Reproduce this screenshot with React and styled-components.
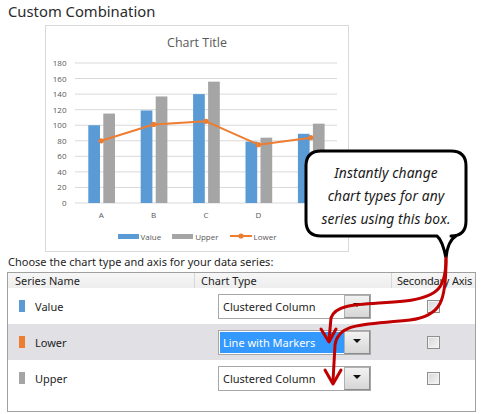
import React from "react";
import styled, { createGlobalStyle } from "styled-components";

const Global = createGlobalStyle`
  html, body { margin: 0; padding: 0; background: #fff; }
  body { font-family: "Noto Sans", "Open Sans", sans-serif; color: #1e1e1e; }
`;

const Page = styled.div`
  position: relative;
  width: 481px;
  height: 414px;
  overflow: hidden;
  background: #fff;
`;

const Heading = styled.div`
  padding-left: 8px;
  font-size: 14.8px;
  line-height: 22px;
  color: #2b2b2b;
`;

const ChartPanel = styled.div`
  box-sizing: border-box;
  margin: 3px 0 0 45px;
  width: 304px;
  height: 227px;
  border: 1px solid #d9d9d9;
  display: flex;
  flex-direction: column;
  font-family: "Open Sans", sans-serif;
`;

const ChartTitle = styled.div`
  height: 30px;
  padding-top: 4px;
  box-sizing: border-box;
  text-align: center;
  font-size: 12.5px;
  line-height: 26px;
  color: #595959;
`;

const Plot = styled.svg`
  display: block;
  width: 302px;
  height: 169px;
`;

const Legend = styled.div`
  height: 22px;
  display: flex;
  justify-content: center;
  align-items: center;
  gap: 11px;
  font-size: 8px;
  color: #595959;
`;

const LegendItem = styled.div`
  display: flex;
  align-items: center;
  gap: 2px;
`;

const LegendBar = styled.span`
  width: 21px;
  height: 5px;
  background: ${(p) => p.$color};
`;

const Instruction = styled.div`
  margin: 2px 0 0 8px;
  font-size: 11px;
  line-height: 16px;
  color: #1e1e1e;
`;

const Table = styled.div`
  box-sizing: border-box;
  margin: 2px 0 0 7px;
  width: 469px;
  height: 140px;
  border: 1px solid #a0a0a0;
`;

const Grid = styled.div`
  display: grid;
  grid-template-columns: 186px 197px 1fr;
`;

const HeaderRow = styled(Grid)`
  height: 15px;
  background: linear-gradient(#f6f6f6, #eeeeee);
  font-size: 11px;
  line-height: 15px;
  color: #1e1e1e;
`;

const HeaderCell = styled.div`
  padding-left: ${(p) => p.$pad}px;
  border-left: ${(p) => (p.$first ? "none" : "1px solid #d8d8d8")};
  white-space: nowrap;
  overflow: hidden;
  letter-spacing: ${(p) => (p.$tight ? "-0.2px" : "0")};
`;

const Row = styled(Grid)`
  height: 36px;
  align-items: center;
  background: ${(p) => (p.$selected ? "#e0e0e5" : "transparent")};
  font-size: 11px;
`;

const SeriesCell = styled.div`
  display: flex;
  align-items: center;
  gap: 10px;
  padding-left: 11px;
`;

const Swatch = styled.span`
  width: 6px;
  height: 12px;
  background: ${(p) => p.$color};
`;

const TypeCell = styled.div`
  padding-left: 24px;
`;

const Dropdown = styled.div`
  box-sizing: border-box;
  width: 153px;
  height: 25px;
  display: flex;
  border: 1px solid #a7a7a7;
  background: #fff;
`;

const DropText = styled.div`
  flex: 1;
  margin: 1px 0 1px 1px;
  padding-left: 3px;
  line-height: 21px;
  background: ${(p) => (p.$selected ? "#3399ff" : "#fff")};
  color: ${(p) => (p.$selected ? "#fff" : "#1e1e1e")};
  white-space: nowrap;
`;

const DropButton = styled.div`
  box-sizing: border-box;
  width: 26px;
  display: flex;
  align-items: center;
  justify-content: center;
  border: 1px solid #8c8c8c;
  border-top-color: #b0b0b0;
  border-left-color: #b0b0b0;
  background: linear-gradient(#f2f2f2, #d6d6d6);
`;

const Caret = styled.span`
  width: 0;
  height: 0;
  margin-top: -2px;
  border-left: 4px solid transparent;
  border-right: 4px solid transparent;
  border-top: 4px solid #111;
`;

const CheckCell = styled.div`
  display: flex;
  justify-content: center;
`;

const Check = styled.span`
  box-sizing: border-box;
  width: 13px;
  height: 13px;
  border: 1px solid #8e8e8e;
  background: linear-gradient(135deg, #d6d6d6, #f6f6f6);
  box-shadow: inset 0 0 0 1px #f2f2f2;
`;

const Callout = styled.div`
  position: absolute;
  left: 303px;
  top: 148px;
  width: 166px;
  height: 114px;
`;

const CalloutShape = styled.svg`
  position: absolute;
  left: 0;
  top: 0;
`;

const CalloutText = styled.div`
  position: absolute;
  left: 2px;
  top: 13px;
  width: 162px;
  text-align: center;
  font-family: "Noto Sans", sans-serif;
  font-style: italic;
  font-size: 13.8px;
  line-height: 23px;
  letter-spacing: 0.1px;
  color: #1a1a1a;
`;

const Arrows = styled.svg`
  position: absolute;
  left: 0;
  top: 0;
  pointer-events: none;
`;

const COLORS = { value: "#5b9bd5", upper: "#a5a5a5", lower: "#ed7d31" };
const CATS = ["A", "B", "C", "D", "E"];
const VALUE = [100, 119, 140, 79, 89];
const UPPER = [115, 137, 156, 84, 102];
const LOWER = [80, 101, 105, 75, 84];
const Y0 = 203;
const K = 140 / 180;
const X0 = 75;
const CW = 52.4;
const yv = (v) => Y0 - v * K;

function Chart() {
  const ticks = [0, 20, 40, 60, 80, 100, 120, 140, 160, 180];
  const pts = LOWER.map((v, i) => [X0 + CW * i + CW / 2, yv(v)]);
  return (
    <Plot viewBox="46 56 302 169">
      {ticks.map((t) => (
        <g key={t}>
          <line x1={75} x2={337} y1={yv(t)} y2={yv(t)} stroke="#d9d9d9" strokeWidth="1" />
          <text x={66.5} y={yv(t) + 3} textAnchor="end" fontSize="8" fill="#595959">
            {t}
          </text>
        </g>
      ))}
      {CATS.map((c, i) => {
        const x0 = X0 + CW * i;
        return (
          <g key={c}>
            <rect x={x0 + 13.3} y={yv(VALUE[i])} width={11.7} height={VALUE[i] * K} fill={COLORS.value} />
            <rect x={x0 + 28.3} y={yv(UPPER[i])} width={11.7} height={UPPER[i] * K} fill={COLORS.upper} />
            <text x={x0 + CW / 2} y={218} textAnchor="middle" fontSize="8" fill="#595959">
              {c}
            </text>
          </g>
        );
      })}
      <polyline
        points={pts.map((p) => p.join(",")).join(" ")}
        fill="none"
        stroke={COLORS.lower}
        strokeWidth="2"
        strokeLinejoin="round"
      />
      {pts.map((p, i) => (
        <circle key={i} cx={p[0]} cy={p[1]} r="2.6" fill={COLORS.lower} />
      ))}
    </Plot>
  );
}

const ROWS = [
  { name: "Value", color: COLORS.value, type: "Clustered Column" },
  { name: "Lower", color: COLORS.lower, type: "Line with Markers", selected: true },
  { name: "Upper", color: COLORS.upper, type: "Clustered Column" },
];

export default function App() {
  return (
    <Page>
      <Global />
      <Heading>Custom Combination</Heading>
      <ChartPanel>
        <ChartTitle>Chart Title</ChartTitle>
        <Chart />
        <Legend>
          <LegendItem>
            <LegendBar $color={COLORS.value} />
            Value
          </LegendItem>
          <LegendItem>
            <LegendBar $color={COLORS.upper} />
            Upper
          </LegendItem>
          <LegendItem>
            <svg width="22" height="6" viewBox="0 0 22 6">
              <line x1="0" x2="22" y1="3" y2="3" stroke={COLORS.lower} strokeWidth="2" />
              <circle cx="11" cy="3" r="2.6" fill={COLORS.lower} />
            </svg>
            Lower
          </LegendItem>
        </Legend>
      </ChartPanel>
      <Instruction>Choose the chart type and axis for your data series:</Instruction>
      <Table>
        <HeaderRow>
          <HeaderCell $first $pad={7}>Series Name</HeaderCell>
          <HeaderCell $pad={6}>Chart Type</HeaderCell>
          <HeaderCell $pad={5} $tight>Secondary Axis</HeaderCell>
        </HeaderRow>
        {ROWS.map((r) => (
          <Row key={r.name} $selected={r.selected}>
            <SeriesCell>
              <Swatch $color={r.color} />
              {r.name}
            </SeriesCell>
            <TypeCell>
              <Dropdown>
                <DropText $selected={r.selected}>{r.type}</DropText>
                <DropButton>
                  <Caret />
                </DropButton>
              </Dropdown>
            </TypeCell>
            <CheckCell>
              <Check />
            </CheckCell>
          </Row>
        ))}
      </Table>
      <Callout>
        <CalloutShape width="166" height="114" viewBox="0 0 166 114">
          <path
            d="M 18 3 L 148 3 Q 163 3 163 18 L 163 73 Q 163 88 148 88 L 153 88 C 146 92 144 100 143 110 C 141 100 139 92 134 88 L 18 88 Q 3 88 3 73 L 3 18 Q 3 3 18 3 Z"
            fill="#fff"
            stroke="#000"
            strokeWidth="3"
            strokeLinejoin="round"
          />
        </CalloutShape>
        <CalloutText>
          Instantly change
          <br />
          chart types for any
          <br />
          series using this box.
        </CalloutText>
      </Callout>
      <Arrows width="481" height="414" viewBox="0 0 481 414">
        <g fill="none" stroke="#c00000" strokeWidth="3" strokeLinecap="round" strokeLinejoin="round">
          <path d="M 446 258 C 446 286 440 297 405 301 C 365 305 336 302 331 318 L 329 340" />
          <path d="M 321 329 L 329 342 L 336 329" />
          <path d="M 446 260 C 446 300 442 316 410 320 C 365 325 338 322 335 345 L 333 381" />
          <path d="M 325 370 L 333 384 L 341 370" />
        </g>
      </Arrows>
    </Page>
  );
}
